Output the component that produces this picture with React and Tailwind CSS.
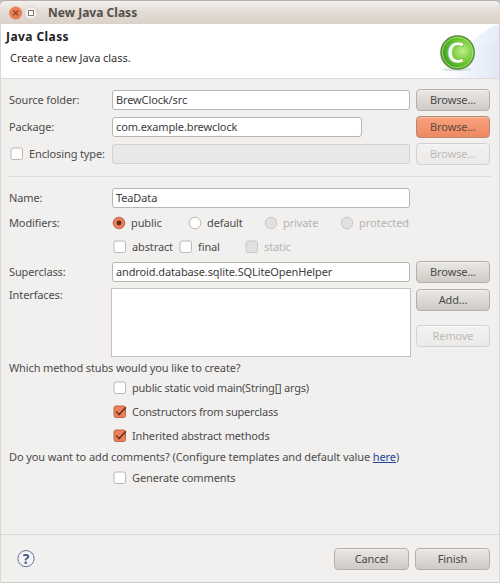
const Button = ({ children, variant = "normal", className = "w-[74px]" }) => {
  const styles = {
    normal: "border-[#b3afab] bg-linear-to-b from-[#eae8e6] to-[#cfcac6] text-[#4a4a48]",
    active: "border-[#b98670] bg-linear-to-b from-[#f8a17d] to-[#ee8961] text-[#5e4a42]",
    disabled: "border-[#d4d2d0] bg-linear-to-b from-[#f3f2f1] to-[#ebeae8] text-[#bcbab8]",
  };

  return (
    <button
      disabled={variant === "disabled"}
      className={`flex h-[22px] shrink-0 items-center justify-center rounded-[4px] border shadow-[inset_0_1px_0_rgba(255,255,255,0.35)] ${styles[variant]} ${className}`}
    >
      {children}
    </button>
  );
};

const Label = ({ children, className = "" }) => (
  <span className={`w-[103px] shrink-0 ${className}`}>{children}</span>
);

const Field = ({ value = "", disabled, className = "w-[298px]" }) => (
  <div
    className={`flex h-[20px] shrink-0 items-center rounded-[3px] border pl-[3px] ${
      disabled ? "border-[#d3d1cf] bg-[#e9e8e7]" : "border-[#b9b5b1] bg-white text-[#3c3c3c]"
    } ${className}`}
  >
    {value}
  </div>
);

const Checkbox = ({ checked, disabled }) => (
  <svg viewBox="0 0 14 14" className="h-[14px] w-[14px] shrink-0">
    <rect
      x="1"
      y="1"
      width="11.5"
      height="11.5"
      rx="2"
      fill={checked ? "#ee8059" : disabled ? "#e2e0de" : "#fff"}
      stroke={checked ? "#b9674a" : disabled ? "#cbc9c7" : "#bab7b4"}
    />
    {checked && <path d="M3.3 6.4 6 9.6 13 2.2" fill="none" stroke="#5b2d1f" strokeWidth="1.4" />}
  </svg>
);

const Radio = ({ checked, disabled }) => (
  <svg viewBox="0 0 14 14" className="h-[14px] w-[14px] shrink-0">
    <circle
      cx="7"
      cy="7"
      r="5.8"
      fill={checked ? "#ee8059" : disabled ? "#e2e0de" : "#fff"}
      stroke={checked ? "#b9674a" : disabled ? "#cbc9c7" : "#bab7b4"}
    />
    {checked && <circle cx="7" cy="7" r="2.4" fill="#5b2d1f" />}
  </svg>
);

const Option = ({ icon, children, disabled, className = "" }) => (
  <label className={`flex shrink-0 items-center gap-[5px] ${disabled ? "text-[#b5b3b1]" : ""} ${className}`}>
    {icon}
    <span>{children}</span>
  </label>
);

const TitleBar = () => (
  <div className="flex h-6 items-center rounded-t-[5px] border-t border-[#b9b1aa] bg-linear-to-b from-[#f3f1ee] via-[#e2dad3] to-[#dcd2ca] pl-[8px]">
    <svg viewBox="0 0 32 16" className="h-4 w-8">
      <circle cx="7.7" cy="8" r="6.3" fill="#ee7b4f" stroke="#dd9a7d" strokeWidth="0.8" />
      <path d="M5.4 5.7 10 10.3M10 5.7 5.4 10.3" stroke="#70402e" strokeWidth="1.1" />
      <circle cx="22.9" cy="8" r="6.3" fill="#f3f0ed" stroke="#d0c9c3" strokeWidth="0.8" />
      <rect x="20.5" y="5.5" width="5" height="5" fill="#fff" stroke="#77716b" strokeWidth="0.9" />
    </svg>
    <h1 className="ml-[8px] text-[12px] font-bold tracking-[0.02px] text-[#554f4a]">New Java Class</h1>
  </div>
);

const Header = () => (
  <div className="flex h-[55px] justify-between border-b border-[#dcdad8] bg-white">
    <div className="pl-[5px] pt-[5px] text-[#333]">
      <h2 className="text-[12px] leading-4 font-bold tracking-[0.42px] text-[#222]">Java Class</h2>
      <p className="mt-[5px] ml-[4px] leading-4 tracking-[-0.04px]">Create a new Java class.</p>
    </div>
    <svg viewBox="0 0 80 54" className="h-[54px] w-20">
      <defs>
        <radialGradient id="ball" cx="0.65" cy="0.45" r="0.65">
          <stop offset="0" stopColor="#c2ee8d" />
          <stop offset="0.55" stopColor="#6cc931" />
          <stop offset="1" stopColor="#359515" />
        </radialGradient>
        <linearGradient id="sweep">
          <stop offset="0" stopColor="#fff" />
          <stop offset="1" stopColor="#dce5f6" />
        </linearGradient>
      </defs>
      <path d="M20 54C38 34 56 8 80 0V54Z" fill="url(#sweep)" opacity="0.75" />
      <path d="M24 54C40 36 60 20 80 18V54Z" fill="url(#sweep)" opacity="0.6" />
      <ellipse cx="38" cy="45.5" rx="15" ry="1.6" fill="#c9d0d0" opacity="0.6" />
      <circle cx="38.6" cy="28.5" r="16.7" fill="url(#ball)" stroke="#568c3c" strokeWidth="1.3" />
      <circle cx="38.6" cy="28.5" r="15.3" fill="none" stroke="#aee184" strokeWidth="0.9" />
      <text
        x="36.6"
        y="38.6"
        textAnchor="middle"
        fontFamily="Noto Sans, sans-serif"
        fontWeight="700"
        fontSize="29"
        fill="#f7fff0"
        stroke="#58a832"
        strokeWidth="0.6"
      >
        C
      </text>
    </svg>
  </div>
);

const App = () => {
  return (
    <div className="flex h-[583px] w-[500px] flex-col overflow-hidden bg-[#c2bab4] font-['Noto_Sans',sans-serif] text-[11px] leading-[14px] tracking-[-0.12px] text-[#4c4c4c]">
      <TitleBar />
      <div className="flex flex-1 flex-col border-x border-b border-x-[#d9d6d3] border-b-[#cfccc9] bg-[#f1f0ef]">
        <Header />

        <main className="flex flex-1 flex-col px-2">
          <div className="mt-[10px] flex flex-col gap-[5px]">
            <div className="flex h-[22px] items-center">
              <Label>Source folder:</Label>
              <Field value="BrewClock/src" />
              <Button className="ml-[6px] w-[74px]">Browse...</Button>
            </div>
            <div className="flex h-[22px] items-center">
              <Label>Package:</Label>
              <Field value="com.example.brewclock" className="w-[250px]" />
              <Button variant="active" className="ml-[54px] w-[74px]">Browse...</Button>
            </div>
            <div className="flex h-[22px] items-center">
              <div className="w-[103px] shrink-0 pl-px">
                <Option icon={<Checkbox />}>Enclosing type:</Option>
              </div>
              <Field disabled />
              <Button variant="disabled" className="ml-[6px] w-[74px]">Browse...</Button>
            </div>
          </div>

          <hr className="mt-[11px] border-[#dddbd9]" />

          <div className="mt-[10px] flex h-[22px] items-center">
            <Label>Name:</Label>
            <Field value="TeaData" />
          </div>
          <div className="mt-[2px] flex h-6 items-center">
            <Label>Modifiers:</Label>
            <Option icon={<Radio checked />} className="w-[76px]">public</Option>
            <Option icon={<Radio />} className="w-[76px]">default</Option>
            <Option icon={<Radio disabled />} disabled className="w-[76px]">private</Option>
            <Option icon={<Radio disabled />} disabled className="tracking-normal">protected</Option>
          </div>
          <div className="flex h-6 items-center pl-[104px]">
            <Option icon={<Checkbox />} className="w-[66px]">abstract</Option>
            <Option icon={<Checkbox />} className="w-[66px]">final</Option>
            <Option icon={<Checkbox disabled />} disabled>static</Option>
          </div>
          <div className="mt-[2px] flex h-[22px] items-center">
            <Label>Superclass:</Label>
            <Field value="android.database.sqlite.SQLiteOpenHelper" />
            <Button className="ml-[6px] w-[74px]">Browse...</Button>
          </div>
          <div className="mt-[5px] flex h-[69px]">
            <Label className="w-[102px]">Interfaces:</Label>
            <div className="w-[300px] shrink-0 border border-[#c4c1be] bg-white -ml-px" />
            <div className="ml-[5px] flex flex-col gap-[14px] pt-px">
              <Button>Add...</Button>
              <Button variant="disabled">Remove</Button>
            </div>
          </div>

          <p className="flex h-[19px] items-center pt-[3px]">Which method stubs would you like to create?</p>
          <div className="flex flex-col pl-[104px]">
            <Option icon={<Checkbox />} className="h-6 tracking-[-0.23px]">public static void main(String[] args)</Option>
            <Option icon={<Checkbox checked />} className="h-6 tracking-[-0.2px]">Constructors from superclass</Option>
            <Option icon={<Checkbox checked />} className="h-6 tracking-[-0.15px]">Inherited abstract methods</Option>
          </div>
          <p className="flex h-[18px] items-center whitespace-pre tracking-[-0.1px]">
            Do you want to add comments? (Configure templates and default value{" "}
            <a href="#" className="text-[#1c459b] underline">here</a>)
          </p>
          <Option icon={<Checkbox />} className="h-6 pl-[104px]">Generate comments</Option>
        </main>

        <footer className="flex h-[48px] items-center border-t border-[#d9d7d5] pr-[9px] pl-4">
          <svg viewBox="0 0 18 18" className="h-[18px] w-[18px]">
            <circle cx="9" cy="8.6" r="8.1" fill="#f4f6fa" stroke="#66718a" />
            <text x="9" y="13.6" textAnchor="middle" fontWeight="700" fontSize="14" fill="#4a5c86">?</text>
          </svg>
          <Button className="ml-auto w-[75px]">Cancel</Button>
          <Button className="ml-[6px] w-[75px]">Finish</Button>
        </footer>
      </div>
    </div>
  );
};

export default App;
